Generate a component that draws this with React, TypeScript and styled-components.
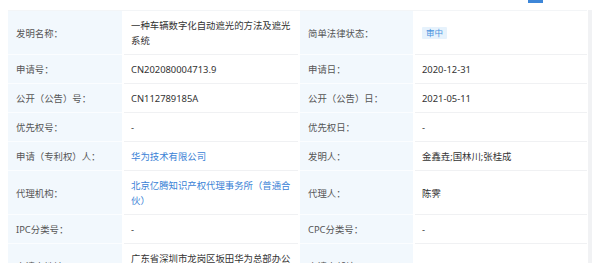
import React from 'react';
import styled, { createGlobalStyle } from 'styled-components';

const GlobalStyle = createGlobalStyle`
  html, body {
    margin: 0;
    padding: 0;
    background: #ffffff;
    overflow: hidden;
  }
  body {
    font-family: "Noto Sans", "Noto Sans CJK SC", sans-serif;
  }
`;

type Cell = { text: string; kind?: 'link' | 'badge' };
type Row = [string, Cell, string, Cell];

const rows: Row[] = [
  ['发明名称：', { text: '一种车辆数字化自动遮光的方法及遮光系统' }, '简单法律状态：', { text: '审中', kind: 'badge' }],
  ['申请号：', { text: 'CN202080004713.9' }, '申请日：', { text: '2020-12-31' }],
  ['公开（公告）号：', { text: 'CN112789185A' }, '公开（公告）日：', { text: '2021-05-11' }],
  ['优先权号：', { text: '-' }, '优先权日：', { text: '-' }],
  ['申请（专利权）人：', { text: '华为技术有限公司', kind: 'link' }, '发明人：', { text: '金鑫垚;国林川;张桂成' }],
  ['代理机构：', { text: '北京亿腾知识产权代理事务所（普通合伙）', kind: 'link' }, '代理人：', { text: '陈霁' }],
  ['IPC分类号：', { text: '-' }, 'CPC分类号：', { text: '-' }],
  ['申请人地址：', { text: '广东省深圳市龙岗区坂田华为总部办公楼' }, '申请人邮编：', { text: '518129' }],
];

function Value({ cell }: { cell: Cell }) {
  if (cell.kind === 'badge') return <Badge>{cell.text}</Badge>;
  if (cell.kind === 'link') return <LinkText>{cell.text}</LinkText>;
  return <span>{cell.text}</span>;
}

export default function App() {
  return (
    <>
      <GlobalStyle />
      <Page>
        <TopStrip>
          <Tab />
        </TopStrip>
        <Body>
          <Table>
            {rows.map((row, key) => (
              <React.Fragment key={key}>
                <Label>{row[0]}</Label>
                <ValueCell><Value cell={row[1]} /></ValueCell>
                <Label>{row[2]}</Label>
                <ValueCell><Value cell={row[3]} /></ValueCell>
              </React.Fragment>
            ))}
          </Table>
          <Rail />
        </Body>
      </Page>
    </>
  );
}

const Page = styled.div`
  width: 600px;
  height: 263px;
  overflow: hidden;
  font-size: 9.4px;
  line-height: 15px;
  color: #333333;
`;

const TopStrip = styled.div`
  height: 10px;
  padding-left: 528px;
`;

const Tab = styled.div`
  width: 15px;
  height: 3px;
  background: #3d86d8;
`;

const Body = styled.div`
  display: flex;
  align-items: stretch;
  padding-left: 8px;
`;

const Table = styled.div`
  display: grid;
  grid-template-columns: 114px 174px 113px 172px;
  column-gap: 2px;
  background: #ffffff;
  border-top: 1px solid #f3f5f7;
`;

const Label = styled.div`
  display: flex;
  align-items: center;
  padding: 7px 6px 6px 8px;
  background: #f2f8fd;
  border-bottom: 1px solid #fbfdff;
  color: #555555;
`;

const ValueCell = styled.div`
  display: flex;
  align-items: center;
  padding: 7px 5px 6px 7px;
  background: #ffffff;
  border-bottom: 1px solid #f0f1f3;
  color: #333333;
`;

const LinkText = styled.span`
  color: #3a82d6;
`;

const Badge = styled.span`
  display: inline-block;
  padding: 0 4px;
  font-size: 8.5px;
  line-height: 12px;
  color: #4a92de;
  background: #e6f2fc;
  border-radius: 1px;
`;

const Rail = styled.div`
  width: 4px;
  margin-left: 1px;
  background: #f1f2f4;
`;
